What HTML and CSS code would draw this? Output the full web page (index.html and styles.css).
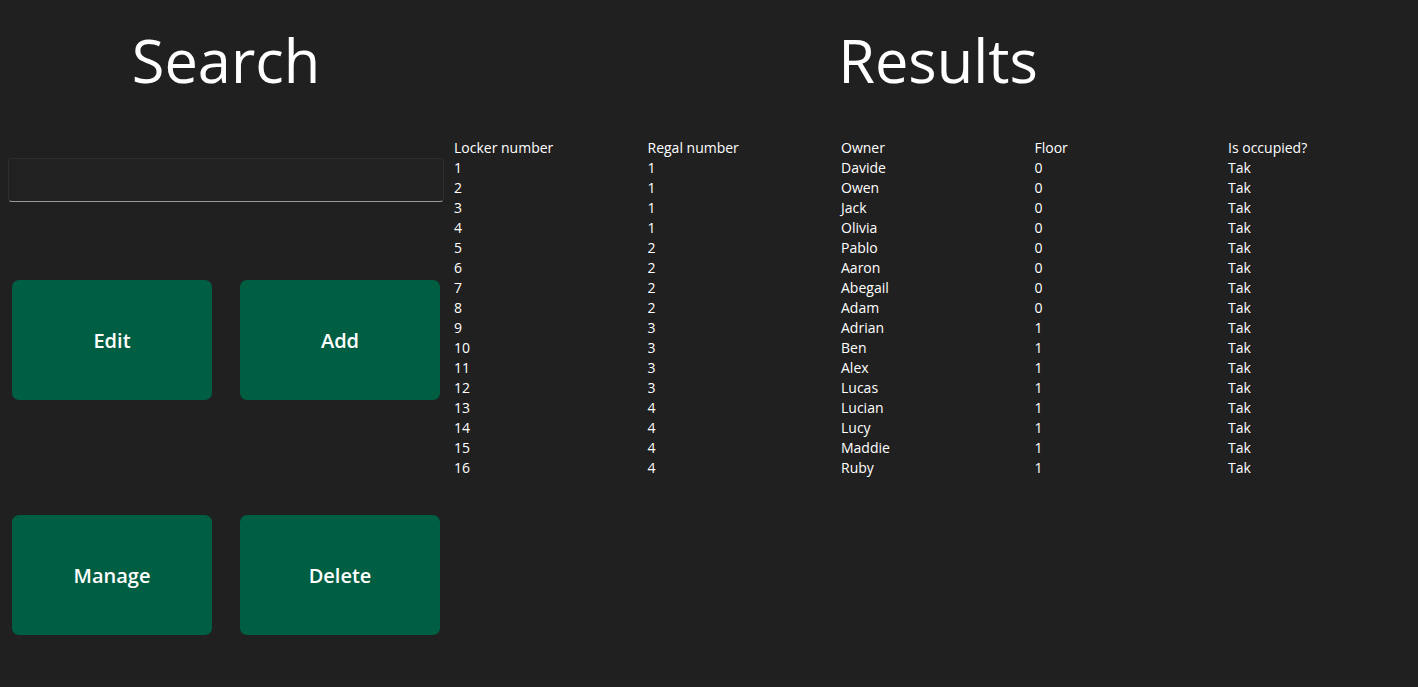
FILE: index.html
```html
<!DOCTYPE html>
<html lang="en">
<head>
<meta charset="utf-8">
<title>Lockers</title>
<link rel="stylesheet" href="styles.css">
</head>
<body>
<div class="app">
  <section class="left">
    <h1 class="title">Search</h1>
    <input class="search" type="text">
    <div class="buttons">
      <button class="btn">Edit</button>
      <button class="btn">Add</button>
      <button class="btn">Manage</button>
      <button class="btn">Delete</button>
    </div>
  </section>
  <section class="right">
    <h1 class="title">Results</h1>
    <div class="table">
      <div class="row"><span>Locker number</span><span>Regal number</span><span>Owner</span><span>Floor</span><span>Is occupied?</span></div>
      <div class="row"><span>1</span><span>1</span><span>Davide</span><span>0</span><span>Tak</span></div>
      <div class="row"><span>2</span><span>1</span><span>Owen</span><span>0</span><span>Tak</span></div>
      <div class="row"><span>3</span><span>1</span><span>Jack</span><span>0</span><span>Tak</span></div>
      <div class="row"><span>4</span><span>1</span><span>Olivia</span><span>0</span><span>Tak</span></div>
      <div class="row"><span>5</span><span>2</span><span>Pablo</span><span>0</span><span>Tak</span></div>
      <div class="row"><span>6</span><span>2</span><span>Aaron</span><span>0</span><span>Tak</span></div>
      <div class="row"><span>7</span><span>2</span><span>Abegail</span><span>0</span><span>Tak</span></div>
      <div class="row"><span>8</span><span>2</span><span>Adam</span><span>0</span><span>Tak</span></div>
      <div class="row"><span>9</span><span>3</span><span>Adrian</span><span>1</span><span>Tak</span></div>
      <div class="row"><span>10</span><span>3</span><span>Ben</span><span>1</span><span>Tak</span></div>
      <div class="row"><span>11</span><span>3</span><span>Alex</span><span>1</span><span>Tak</span></div>
      <div class="row"><span>12</span><span>3</span><span>Lucas</span><span>1</span><span>Tak</span></div>
      <div class="row"><span>13</span><span>4</span><span>Lucian</span><span>1</span><span>Tak</span></div>
      <div class="row"><span>14</span><span>4</span><span>Lucy</span><span>1</span><span>Tak</span></div>
      <div class="row"><span>15</span><span>4</span><span>Maddie</span><span>1</span><span>Tak</span></div>
      <div class="row"><span>16</span><span>4</span><span>Ruby</span><span>1</span><span>Tak</span></div>
    </div>
  </section>
</div>
</body>
</html>
```

FILE: styles.css
```css
html, body {
  margin: 0;
  padding: 0;
  background: #202020;
  color: #ffffff;
  font-family: "Open Sans", "Noto Sans", sans-serif;
  overflow: hidden;
  height: 687px;
}

.app {
  display: flex;
  padding: 28px 0 0 8px;
}

.title {
  margin: 0;
  font-size: 59.5px;
  font-weight: 400;
  line-height: 64px;
  text-align: center;
}

.left {
  width: 436px;
  flex: none;
  display: flex;
  flex-direction: column;
}

.search {
  box-sizing: border-box;
  margin-top: 66px;
  width: 436px;
  height: 44px;
  background: #212121;
  border: 1px solid #2e2e2e;
  border-bottom: 1px solid #9a9a9a;
  border-radius: 4px;
  outline: none;
  color: #fff;
  font: inherit;
}

.buttons {
  display: grid;
  grid-template-columns: 200px 200px;
  grid-auto-rows: 120px;
  column-gap: 28px;
  row-gap: 115px;
  padding-left: 4px;
  margin-top: 78px;
}

.btn {
  background: #005e42;
  border: none;
  border-radius: 7px;
  color: #ffffff;
  font-family: "Open Sans", "Noto Sans", sans-serif;
  font-size: 20px;
  font-weight: 600;
  padding-top: 2px;
  cursor: pointer;
}

.right {
  width: 968px;
  flex: none;
  margin-left: 10px;
  display: flex;
  flex-direction: column;
}

.table {
  margin-top: 46px;
  font-size: 14px;
  line-height: 20px;
}

.row {
  display: grid;
  grid-template-columns: repeat(5, 193.5px);
}
```
